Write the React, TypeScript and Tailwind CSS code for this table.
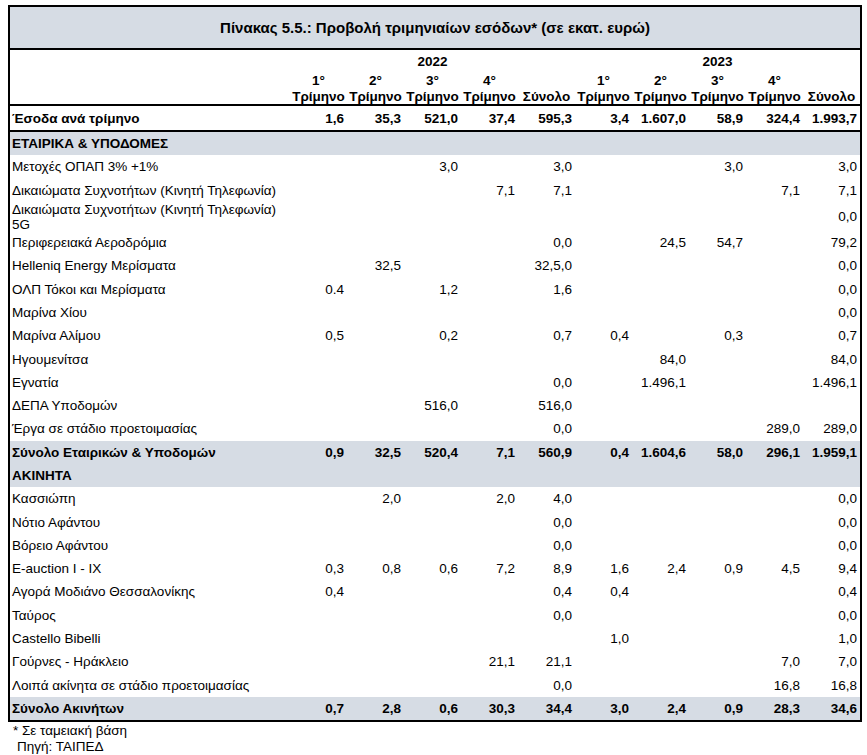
import React from "react";

type Row = {
  label: React.ReactNode;
  values: string[];
  kind?: "section" | "total" | "item";
  tall?: boolean;
};

const e = "";

const rows: Row[] = [
  { label: "ΕΤΑΙΡΙΚΑ & ΥΠΟΔΟΜΕΣ", values: [], kind: "section" },
  { label: "Μετοχές ΟΠΑΠ 3% +1%", values: [e, e, "3,0", e, "3,0", e, e, "3,0", e, "3,0"] },
  { label: "Δικαιώματα Συχνοτήτων (Κινητή Τηλεφωνία)", values: [e, e, e, "7,1", "7,1", e, e, e, "7,1", "7,1"] },
  {
    label: (
      <>
        Δικαιώματα Συχνοτήτων (Κινητή Τηλεφωνία)
        <br />
        5G
      </>
    ),
    values: [e, e, e, e, e, e, e, e, e, "0,0"],
    tall: true,
  },
  { label: "Περιφερειακά Αεροδρόμια", values: [e, e, e, e, "0,0", e, "24,5", "54,7", e, "79,2"] },
  { label: "Helleniq Energy Μερίσματα", values: [e, "32,5", e, e, "32,5,0", e, e, e, e, "0,0"] },
  { label: "ΟΛΠ Τόκοι και Μερίσματα", values: ["0.4", e, "1,2", e, "1,6", e, e, e, e, "0,0"] },
  { label: "Μαρίνα Χίου", values: [e, e, e, e, e, e, e, e, e, "0,0"] },
  { label: "Μαρίνα Αλίμου", values: ["0,5", e, "0,2", e, "0,7", "0,4", e, "0,3", e, "0,7"] },
  { label: "Ηγουμενίτσα", values: [e, e, e, e, e, e, "84,0", e, e, "84,0"] },
  { label: "Εγνατία", values: [e, e, e, e, "0,0", e, "1.496,1", e, e, "1.496,1"] },
  { label: "ΔΕΠΑ Υποδομών", values: [e, e, "516,0", e, "516,0", e, e, e, e, e] },
  { label: "Έργα σε στάδιο προετοιμασίας", values: [e, e, e, e, "0,0", e, e, e, "289,0", "289,0"] },
  {
    label: "Σύνολο Εταιρικών & Υποδομών",
    values: ["0,9", "32,5", "520,4", "7,1", "560,9", "0,4", "1.604,6", "58,0", "296,1", "1.959,1"],
    kind: "total",
  },
  { label: "ΑΚΙΝΗΤΑ", values: [], kind: "section" },
  { label: "Κασσιώπη", values: [e, "2,0", e, "2,0", "4,0", e, e, e, e, "0,0"] },
  { label: "Νότιο Αφάντου", values: [e, e, e, e, "0,0", e, e, e, e, "0,0"] },
  { label: "Βόρειο Αφάντου", values: [e, e, e, e, "0,0", e, e, e, e, "0,0"] },
  { label: "E-auction I - IX", values: ["0,3", "0,8", "0,6", "7,2", "8,9", "1,6", "2,4", "0,9", "4,5", "9,4"] },
  { label: "Αγορά Μοδιάνο Θεσσαλονίκης", values: ["0,4", e, e, e, "0,4", "0,4", e, e, e, "0,4"] },
  { label: "Ταύρος", values: [e, e, e, e, "0,0", e, e, e, e, "0,0"] },
  { label: "Castello Bibelli", values: [e, e, e, e, e, "1,0", e, e, e, "1,0"] },
  { label: "Γούρνες - Ηράκλειο", values: [e, e, e, "21,1", "21,1", e, e, e, "7,0", "7,0"] },
  { label: "Λοιπά ακίνητα σε στάδιο προετοιμασίας", values: [e, e, e, e, "0,0", e, e, e, "16,8", "16,8"] },
  {
    label: "Σύνολο Ακινήτων",
    values: ["0,7", "2,8", "0,6", "30,3", "34,4", "3,0", "2,4", "0,9", "28,3", "34,6"],
    kind: "total",
  },
];

const quarters = ["1°", "2°", "3°", "4°"];

const App: React.FC = () => {
  return (
    <div className="w-[867px] h-[755px] bg-white text-black font-['Liberation_Sans',Arial,sans-serif] text-[13.5px] leading-[15px] pt-[5px] pl-[8px]">
      <div className="w-[854px] border-2 border-black">
        {/* Title */}
        <div className="h-[43px] bg-[#d6dce4] border-b-2 border-black flex items-center justify-center font-bold text-[15px]">
          Πίνακας 5.5.: Προβολή τριμηνιαίων εσόδων* (σε εκατ. ευρώ)
        </div>

        {/* Column headers */}
        <div className="h-[56px] border-b-2 border-black grid grid-cols-[280px_repeat(10,57px)] grid-rows-[22px_16px_16px] font-bold">
          <div className="row-span-3" />
          <div className="col-span-5 flex items-center justify-center">2022</div>
          <div className="col-span-5 flex items-center justify-center">2023</div>
          {[0, 1].map((y) => (
            <React.Fragment key={y}>
              {quarters.map((q) => (
                <div key={q} className="flex items-center justify-center">
                  {q}
                </div>
              ))}
              <div />
            </React.Fragment>
          ))}
          {[0, 1].map((y) => (
            <React.Fragment key={y}>
              {quarters.map((q) => (
                <div key={q} className="flex items-center justify-center whitespace-nowrap">
                  Τρίμηνο
                </div>
              ))}
              <div className="flex items-center justify-center">Σύνολο</div>
            </React.Fragment>
          ))}
        </div>

        {/* Revenue per quarter */}
        <div className="h-[26px] border-b-2 border-black grid grid-cols-[280px_repeat(10,57px)] items-center font-bold">
          <div className="pl-[2px]">Έσοδα ανά τρίμηνο</div>
          {["1,6", "35,3", "521,0", "37,4", "595,3", "3,4", "1.607,0", "58,9", "324,4", "1.993,7"].map((v, i) => (
            <div key={i} className="text-right pr-[3px] whitespace-nowrap">
              {v}
            </div>
          ))}
        </div>

        {/* Body */}
        {rows.map((r, idx) => (
          <div
            key={idx}
            className={`grid grid-cols-[280px_repeat(10,57px)] items-center ${
              r.tall ? "h-[29px]" : "h-[23.3px]"
            } ${r.kind === "section" || r.kind === "total" ? "bg-[#d6dce4] font-bold" : ""}`}
          >
            <div className="pl-[2px]">{r.label}</div>
            {r.values.map((v, i) => (
              <div key={i} className="text-right pr-[3px] whitespace-nowrap">
                {v}
              </div>
            ))}
          </div>
        ))}
      </div>

      <div className="pl-[5px] pt-[1px] leading-[16px]">* Σε ταμειακή βάση</div>
      <div className="pl-[9px] leading-[16px]">Πηγή: ΤΑΙΠΕΔ</div>
    </div>
  );
};

export default App;
